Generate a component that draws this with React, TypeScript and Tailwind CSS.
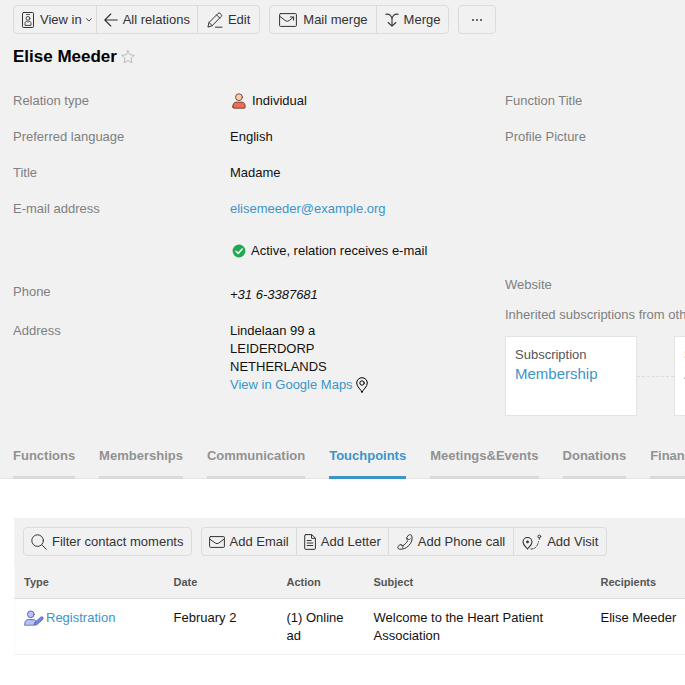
import type { ReactNode } from "react";
import { clsx } from "clsx";

type IconProps = { className?: string; children: ReactNode; box?: string };

function Icon({ className, children, box = "0 0 16 16" }: IconProps) {
  return (
    <svg
      viewBox={box}
      fill="none"
      stroke="currentColor"
      strokeLinecap="round"
      strokeLinejoin="round"
      aria-hidden="true"
      className={clsx("shrink-0", className)}
    >
      {children}
    </svg>
  );
}

const BadgeIcon = () => (
  <Icon box="0 0 12 16" className="h-4 w-3">
    <rect x="0.5" y="0.5" width="11" height="15" rx="1.2" />
    <path d="M4.5 2.500h3" strokeWidth="0.8" />
    <circle cx="6" cy="6.4" r="1.9" strokeWidth="0.9" />
    <path d="M3 13v-1.500c0-1.500.8-2.300 1.900-2.300L6 10.300l1.100-1.100c1.100 0 1.900.8 1.900 2.300V13z" strokeWidth="0.9" />
  </Icon>
);

const ArrowIcon = () => (
  <Icon box="0 0 14 14" className="h-3.5 w-3.5">
    <path d="M13.3 7H.8M6.8 1 .8 7l6 6" strokeWidth="1.1" />
  </Icon>
);

const PencilIcon = () => (
  <Icon className="size-4">
    <path d="m1 14.700 1-4.200L11 1.500a1.500 1.500 0 0 1 2.200 0l.9.9a1.500 1.500 0 0 1 0 2.200L5.200 13.600zM9.600 2.900 12.700 6M2 10.500l3.200 3.100M8.500 15.200H15" />
  </Icon>
);

const MailMergeIcon = () => (
  <Icon box="0 0 18 14" className="h-3.5 w-[18px]">
    <rect x="0.6" y="0.6" width="16.8" height="12.8" rx="0.8" />
    <path d="m1 3.500 5.200 4q2.300 1.900 4.600-.3L14.500 4M11.300 4h3.300v3.200" />
  </Icon>
);

const MergeIcon = () => (
  <Icon box="0 0 14 14" className="h-3.5 w-3.5">
    <path d="M.8 1.200c3.800-.6 6.200 1.800 6.200 5.300V13M13.200 1.200C9.400.6 7 3 7 6.500M3.200 9.500 7 13.200l3.800-3.700" strokeWidth="1.1" />
  </Icon>
);

const SearchIcon = () => (
  <Icon className="size-4">
    <circle cx="6.6" cy="6.6" r="5.8" />
    <path d="m10.800 10.800 4.500 4.500" />
  </Icon>
);

const MailIcon = () => (
  <Icon box="0 0 16 12" className="h-3 w-4">
    <rect x="0.6" y="0.6" width="14.8" height="10.8" rx="0.8" />
    <path d="m1 3.200 5.300 3.900q1.700 1.200 3.400 0L15 3.200" />
  </Icon>
);

const LetterIcon = () => (
  <Icon box="0 0 12 16" className="h-4 w-3">
    <path d="M1.700.6h6L11.400 4v10.200q0 1.200-1 1.200H1.700q-1 0-1-1.200V1.800Q.7.6 1.700.6zM7.500.8v3.500h3.700M3.200 6.500h4M3.200 9h5.600M3.200 11.500h5.600" />
  </Icon>
);

const PhoneIcon = () => (
  <Icon className="size-4">
    <path
      d="M11.900.9c1-.6 2.600-.1 2.900 1 .9 3.400-.2 6.800-3 9.700-2.700 2.800-6.200 4-9.500 3.500-1.300-.2-1.900-1.700-1.100-2.700l1-1.200c.5-.6 1.200-.7 1.800-.4l1.800.9c1.500-.6 3.900-2.900 4.900-5.200l-.9-1.400c-.4-.7-.3-1.400.2-2z"
    />
    <path d="m10 3.700 1.200 1.700c.9.300 2-.1 2.500-.8M3.900 10.700l2 1.200c.3.800.1 1.800-.7 2.300" strokeWidth="0.8" />
  </Icon>
);

const VisitIcon = () => (
  <Icon box="0 0 20 16" className="h-4 w-5">
    <path d="M5.500 14.900C4.700 13.200 1 11.300 1 8a4.500 4.500 0 0 1 9 0c0 3.300-3.700 5.200-4.500 6.900z" strokeWidth="1.1" />
    <circle cx="5.500" cy="7.900" r="1.1" fill="currentColor" strokeWidth="0.6" />
    <circle cx="17.300" cy="2.500" r="1.400" />
    <path d="M17.300 4v1.300" />
    <path d="M9 15c4 0 6.500-2.500 7.500-7.500" strokeDasharray="2 1.700" />
  </Icon>
);

const PinIcon = () => (
  <Icon box="0 0 12 16" className="h-4 w-3 text-black">
    <path d="M6 15.200C5 12.500.7 9.800.7 6a5.300 5.300 0 0 1 10.600 0c0 3.800-4.300 6.500-5.300 9.200z" />
    <circle cx="6" cy="6" r="2.2" />
  </Icon>
);

const IndividualIcon = () => (
  <Icon box="0 0 14 16" className="h-4 w-3.5 text-[#6b3a30]">
    <circle cx="7" cy="4.2" r="3.4" fill="#fbd0a5" strokeWidth="0.9" />
    <path
      d="M.8 13.900c0-3 1.200-4.700 3.200-4.700h6c2 0 3.200 1.700 3.200 4.700q0 1.300-1.200 1.300H2Q.8 15.200.8 13.900z"
      fill="#ee6b55"
      strokeWidth="0.9"
    />
  </Icon>
);

const RegistrationIcon = () => (
  <Icon box="0 0 20 16" className="h-4 w-5 text-[#5560a8]">
    <circle cx="6.8" cy="4.3" r="3.4" fill="#b5c3f8" strokeWidth="0.9" />
    <path d="M.7 14.800c0-3.500 1.300-5.200 3.600-5.200h5c1.300 0 2.200.5 2.800 1.500l-2 3.700z" fill="#b5c3f8" strokeWidth="0.9" />
    <path d="m10.600 14.900.6-2.700 5.500-5c1.600-1.100 3.300.6 2.100 2l-5.500 5.100z" fill="#7187e8" strokeWidth="0.9" />
  </Icon>
);

const ActiveIcon = () => (
  <Icon box="0 0 14 14" className="h-3.5 w-3.5">
    <circle cx="7" cy="7" r="6.4" fill="#1ea952" stroke="none" />
    <path d="m4 7.200 2.200 2.200L10.200 5" stroke="white" strokeWidth="1.5" />
  </Icon>
);

const StarIcon = () => (
  <Icon box="0 0 14 14" className="h-3.5 w-3.5 text-[#bdbdbd]">
    <path d="m7 .7 1.900 4.100 4.500.5-3.400 3 1 4.600L7 10.600l-4 2.300 1-4.600-3.400-3 4.500-.5z" />
  </Icon>
);

function ButtonGroup({ children }: { children: ReactNode }) {
  return (
    <div className="flex shrink-0 divide-x divide-[#dcdcdc] rounded border border-[#dcdcdc]">
      {children}
    </div>
  );
}

function ToolButton({ icon, children, label, className = "gap-[5px] px-2" }: {
  icon?: ReactNode;
  children: ReactNode;
  label?: string;
  className?: string;
}) {
  return (
    <button
      type="button"
      aria-label={label}
      className={clsx("flex h-[27px] items-center whitespace-nowrap text-[#333] hover:bg-white", className)}
    >
      {icon}
      {children}
    </button>
  );
}

function SubscriptionCard({ name }: { name: string }) {
  return (
    <div className="h-20 w-33 shrink-0 border border-[#e4e4e4] bg-white px-[9px] py-[9px]">
      <div className="text-[#555]">Subscription</div>
      <a href="#" className="block text-[15px] leading-5 text-[#3d94c7]">{name}</a>
    </div>
  );
}

const tabs = [
  "Functions",
  "Memberships",
  "Communication",
  "Touchpoints",
  "Meetings&Events",
  "Donations",
  "Financial",
];

const columns = [
  { label: "Type", width: "w-[159px]" },
  { label: "Date", width: "w-[113px]" },
  { label: "Action", width: "w-[87px]" },
  { label: "Subject", width: "w-[227px]" },
  { label: "Recipients", width: "" },
];

export default function App() {
  return (
    <div className="min-h-screen overflow-x-hidden bg-white font-['Liberation_Sans',Arial,sans-serif] text-[13px] leading-[18px] text-[#111]">
      <header className="border-b border-[#e4e4e4] bg-[#f1f1f1] pt-[5px] pl-[13px]">
        <div className="flex gap-[9px]">
          <ButtonGroup>
            <ToolButton icon={<BadgeIcon />} className="gap-1.5 pr-1 pl-2">
              View in
              <Icon box="0 0 6 4" className="-ml-0.5 h-1 w-1.5">
                <path d="m.5.6 2.500 2.500L5.500.6" strokeWidth="0.9" />
              </Icon>
            </ToolButton>
            <ToolButton icon={<ArrowIcon />} className="gap-[5px] px-[7px]">All relations</ToolButton>
            <ToolButton icon={<PencilIcon />} className="gap-[5px] px-[9px]">Edit</ToolButton>
          </ButtonGroup>
          <ButtonGroup>
            <ToolButton icon={<MailMergeIcon />} className="gap-1.5 pr-2 pl-[9px]">Mail merge</ToolButton>
            <ToolButton icon={<MergeIcon />} className="gap-[5px] px-2">Merge</ToolButton>
          </ButtonGroup>
          <ButtonGroup>
            <ToolButton label="More" className="px-3">
              <Icon box="0 0 12 4" className="h-1 w-3">
                <path d="M2 2h.01M6 2h.01M10 2h.01" strokeWidth="1.9" />
              </Icon>
            </ToolButton>
          </ButtonGroup>
        </div>

        <h1 className="mt-[11px] flex items-center gap-1 text-[17px] leading-6 font-bold text-black">
          Elise Meeder <StarIcon />
        </h1>

        <div className="mt-[23px] flex">
          <dl className="grid w-[492px] shrink-0 grid-cols-[217px_1fr] content-start gap-y-[18px] [&_dt]:text-[#808080]">
            <dt>Relation type</dt>
            <dd className="flex items-center gap-1.5 pl-0.5"><IndividualIcon />Individual</dd>
            <dt>Preferred language</dt>
            <dd>English</dd>
            <dt>Title</dt>
            <dd>Madame</dd>
            <dt>E-mail address</dt>
            <dd>
              <a href="#" className="text-[#3d94c7]">elisemeeder@example.org</a>
              <div className="mt-6 flex items-center gap-[5px] pl-0.5"><ActiveIcon />Active, relation receives e-mail</div>
            </dd>
            <dt className="mt-[5px]">Phone</dt>
            <dd className="mt-2 italic">+31 6-3387681</dd>
            <dt>Address</dt>
            <dd>
              Lindelaan 99 a<br />
              LEIDERDORP<br />
              NETHERLANDS
              <div className="flex items-center gap-[3px]">
                <a href="#" className="text-[#3d94c7]">View in Google Maps</a>
                <PinIcon />
              </div>
            </dd>
          </dl>

          <div className="text-[#808080]">
            <div>Function Title</div>
            <div className="mt-[18px]">Profile Picture</div>
            <div className="mt-[130px]">Website</div>
            <div className="mt-3 whitespace-nowrap">Inherited subscriptions from other relations</div>
            <div className="mt-3 flex items-center">
              <SubscriptionCard name="Membership" />
              <div className="w-[37px] shrink-0 border-t border-dashed border-[#dcdcdc]" />
              <SubscriptionCard name="A" />
            </div>
          </div>
        </div>

        <nav className="-mb-px mt-[31px] flex gap-6">
          {tabs.map((tab) => (
            <a
              key={tab}
              href="#"
              className={clsx(
                "border-b-3 pb-[11px] font-bold",
                tab === "Touchpoints" ? "border-[#3d94c7] text-[#3d94c7]" : "border-[#dadada] text-[#929292]",
              )}
            >
              {tab}
            </a>
          ))}
        </nav>
      </header>

      <main className="mt-[39px] ml-3.5">
        <div className="flex gap-[9px] bg-[#f1f1f1] pt-[9px] pb-2.5 pl-[9px]">
          <ButtonGroup>
            <ToolButton icon={<SearchIcon />} className="gap-[5px] px-[7px]">Filter contact moments</ToolButton>
          </ButtonGroup>
          <ButtonGroup>
            <ToolButton icon={<MailIcon />} className="gap-[5px] px-[7px]">Add Email</ToolButton>
            <ToolButton icon={<LetterIcon />} className="gap-[5px] px-[7px]">Add Letter</ToolButton>
            <ToolButton icon={<PhoneIcon />}>Add Phone call</ToolButton>
            <ToolButton icon={<VisitIcon />}>Add Visit</ToolButton>
          </ButtonGroup>
        </div>

        <table className="w-full table-fixed border-l border-[#fafafa] text-left">
          <thead className="bg-[#f1f1f1] text-[11px] text-[#555]">
            <tr className="border-b border-[#dcdcdc]">
              {columns.map((c) => (
                <th key={c.label} scope="col" className={clsx("py-[7px] font-bold first:pl-[9px]", c.width)}>
                  {c.label}
                </th>
              ))}
            </tr>
          </thead>
          <tbody className="align-top">
            <tr className="border-b border-[#f0f0f0]">
              <td className="pt-2.5 pb-[9px] pl-[9px]">
                <a href="#" className="flex items-center gap-0.5 text-[#3d94c7]"><RegistrationIcon />Registration</a>
              </td>
              <td className="pt-2.5 pb-[9px]">February 2</td>
              <td className="pt-2.5 pr-6 pb-[9px]">(1) Online ad</td>
              <td className="pt-2.5 pr-12 pb-[9px]">Welcome to the Heart Patient Association</td>
              <td className="pt-2.5 pb-[9px]">Elise Meeder</td>
            </tr>
          </tbody>
        </table>
      </main>
    </div>
  );
}
